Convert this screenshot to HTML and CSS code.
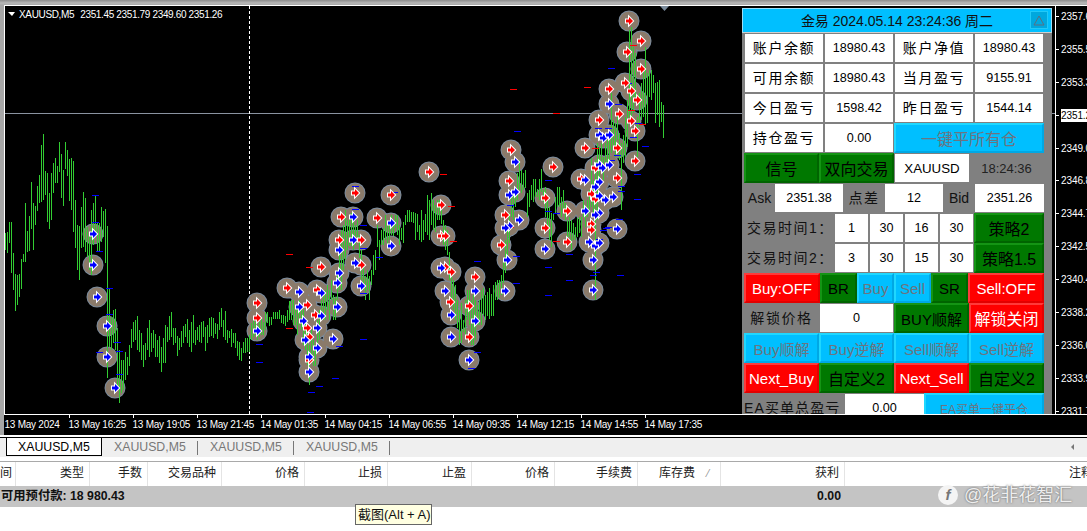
FILE: index.html
```html
<!DOCTYPE html>
<html lang="zh">
<head>
<meta charset="utf-8">
<title>XAUUSD,M5</title>
<link rel="stylesheet" href="styles.css">
</head>
<body>
<div class="app">
  <section class="chart">
    <div class="chart-main">
      <div class="plot">
        <svg class="plot-svg" width="1050" height="408" viewBox="5 6 1050 408" xmlns="http://www.w3.org/2000/svg">
          <defs>
            <path id="discs" d="M429 172h.01M355 193h.01M391 195h.01M341 217h.01M377 218h.01M441 205h.01M339 240h.01M361 240h.01M441 236h.01M445 236h.01M321 267h.01M361 265h.01M445 267h.01M451 272h.01M475 277h.01M287 288h.01M317 290h.01M257 303h.01M307 305h.01M450 302h.01M469 306h.01M257 318h.01M315 315h.01M307 328h.01M309 337h.01M469 337h.01M309 360h.01M629 21h.01M641 41h.01M627 52h.01M641 69h.01M625 83h.01M631 91h.01M609 89h.01M637 100h.01M619 114h.01M599 120h.01M631 121h.01M635 131h.01M585 148h.01M617 148h.01M635 161h.01M511 150h.01M553 167h.01M509 181h.01M595 168h.01M581 179h.01M617 178h.01M591 194h.01M595 199h.01M545 198h.01M567 211h.01M505 215h.01M545 228h.01M591 224h.01M591 230h.01M501 245h.01M567 242h.01M93 234h.01M93 265h.01M97 297h.01M107 326h.01M107 357h.01M115 388h.01M353 217h.01M391 223h.01M353 240h.01M339 250h.01M391 246h.01M339 273h.01M355 263h.01M441 268h.01M299 292h.01M321 293h.01M337 283h.01M361 286h.01M445 291h.01M475 291h.01M299 307h.01M337 307h.01M303 321h.01M321 316h.01M451 315h.01M475 321h.01M257 331h.01M317 328h.01M333 339h.01M305 340h.01M317 348h.01M451 337h.01M309 357h.01M309 372h.01M469 360h.01M609 104h.01M599 135h.01M603 138h.01M609 135h.01M515 162h.01M509 195h.01M515 192h.01M599 165h.01M602 168h.01M609 165h.01M585 180h.01M599 182h.01M595 187h.01M599 196h.01M605 200h.01M613 197h.01M585 211h.01M599 213h.01M595 215h.01M519 220h.01M509 226h.01M505 228h.01M617 229h.01M545 249h.01M589 242h.01M595 246h.01M599 243h.01M507 260h.01M593 260h.01M505 291h.01M593 290h.01"/>
            <path id="r" class="arrow-red" d="M-3-1.5H0V-4L4 0 0 4V1.5H-3Z"/>
            <path id="b" class="arrow-blue" d="M-3-1.5H0V-4L4 0 0 4V1.5H-3Z"/>
          </defs>
          <path class="price-line" d="M5 113.5H1055"/>
          <path class="cross-line" d="M249.5 6V414"/>
          <polygon class="shift-mark" points="660,6 669,6 664.5,11"/>
          <use href="#discs" class="disc-ring"/>
          <use href="#discs" class="disc-fill"/>
          <path class="bars" d="M5 233V250M7 232V253M9 222V243M11 222V273M13 253V290M15 274V311M17 275V305M19 274V297M21 259V289M23 254V262M25 203V262M27 231V252M29 216V251M31 182V229M33 203V250M35 206V225M37 186V211M39 175V203M41 145V202M43 134V200M45 171V195M47 173V222M49 193V229M51 173V220M53 163V193M55 158V183M57 166V183M59 142V172M61 154V198M63 170V206M65 142V169M67 150V176M69 159V201M71 158V210M73 161V232M75 200V248M77 225V270M79 226V280M81 207V248M83 192V247M85 198V252M87 227V257M89 233V270M91 210V275M93 203V245M95 196V233M97 223V252M99 223V252M101 207V242M103 211V237M105 209V263M107 226V378M109 288V347M111 317V350M113 310V343M115 309V350M117 328V387M119 350V403M121 360V393M123 360V390M125 352V380M127 357V375M129 345V366M131 329V348M133 322V342M135 320V340M137 316V350M139 330V352M141 333V360M143 345V367M145 343V360M147 328V350M149 320V357M151 333V352M153 330V348M155 334V357M157 340V357M159 336V363M161 347V372M163 338V363M165 325V363M167 327V342M169 316V340M171 312V337M173 328V345M175 328V343M177 336V356M179 338V350M181 331V347M183 326V343M185 324V337M187 319V343M189 330V347M191 322V352M193 315V343M195 330V345M197 327V340M199 325V342M201 322V343M203 321V337M205 327V351M207 325V343M209 318V337M211 317V336M213 318V338M215 323V334M217 324V339M219 312V330M221 308V327M223 320V337M225 311V340M227 330V343M229 331V338M231 329V347M233 333V343M235 333V348M237 341V356M239 342V360M241 348V361M243 342V353M245 338V353M247 338V352M249 335V352M251 323V340M253 318V337M255 322V335M257 325V340M259 322V337M261 318V335M263 322V335M265 312V330M267 312V323M269 317V326M271 317V325M273 312V319M275 312V319M277 312V319M279 310V319M281 315V323M283 315V324M285 316V326M287 310V322M289 301V320M291 300V320M293 300V325M295 305V325M297 310V335M299 300V325M301 305V330M303 310V345M305 320V350M307 330V365M309 345V385M311 330V360M313 340V366M315 345V366M317 320V345M319 310V340M321 300V320M323 295V320M325 290V320M327 285V310M329 290V320M331 280V300M333 295V320M335 297V320M337 270V300M339 250V290M341 230V290M343 225V270M345 210V260M347 220V250M349 215V246M351 213V246M353 220V250M355 225V245M357 220V240M359 235V258M361 250V280M363 265V290M365 276V300M367 270V290M369 276V300M371 270V285M373 255V275M375 250V270M377 225V247M379 240V260M381 230V245M383 228V245M385 215V240M387 225V245M389 222V240M391 215V235M393 220V236M395 215V228M397 215V235M399 225V245M401 228V240M403 222V243M405 215V225M407 210V222M409 210V222M411 212V222M413 212V223M415 213V240M417 214V232M419 225V240M421 210V242M423 220V240M425 214V232M427 195V235M429 200V240M431 193V225M433 200V230M435 205V232M437 200V220M439 200V220M441 203V224M443 220V245M445 225V250M447 230V255M449 252V280M451 270V300M453 280V310M455 285V320M457 300V328M459 310V345M461 303V343M463 320V332M465 300V335M467 290V320M469 290V325M471 300V345M473 295V345M475 300V340M477 305V325M479 300V325M481 290V325M483 288V315M485 295V320M487 292V316M489 288V319M491 294V316M493 285V316M495 282V300M497 280V300M499 280V298M501 275V295M503 260V283M505 240V273M507 227V260M509 213V243M511 197V217M513 193V220M515 188V207M517 173V200M519 160V190M521 170V193M523 173V190M525 170V188M527 193V217M529 190V207M531 185V200M533 179V202M535 179V197M537 189V197M539 179V200M541 169V192M543 190V202M545 187V217M547 200V227M549 207V240M551 213V247M553 213V220M555 197V213M557 187V207M559 187V207M561 197V217M563 190V213M565 203V220M567 220V243M569 217V237M571 220V250M573 223V240M575 227V240M577 218V237M579 217V233M581 217V237M583 200V217M585 213V227M587 200V217M589 190V213M591 158V207M593 180V217M595 160V300M597 143V220M599 147V187M601 143V173M603 157V180M605 143V170M607 140V167M609 137V160M611 93V153M613 120V150M615 123V157M617 113V140M619 133V160M621 143V210M623 135V163M625 117V157M627 100V147M629 30V117M631 27V120M633 47V113M635 53V97M637 117V157M639 93V127M641 83V120M643 70V117M645 47V125M647 73V123M649 70V97M651 70V100M653 75V93M655 83V123M657 82V115M659 80V127M661 102V122M663 105V138"/>
          <path class="dash-blue" d="M92 195h7M92 222h7M96 251h7M106 288h7M106 314h7M114 342h7M96 352h7M116 351h7M116 374h7M332 378h7M316 386h7M308 392h7M336 346h7M360 339h7M360 293h7M256 344h7M256 362h7M352 186h7M352 209h7M360 225h7M360 248h7M376 257h7M391 192h7M474 352h7M468 368h7M474 261h7M608 68h7M514 131h7M545 180h7M545 211h7M553 213h7M566 254h7M545 267h7M545 295h7M566 280h7M617 275h7M634 199h7M634 174h7M616 219h7M595 128h7M605 128h7M635 123h7M593 272h7M590 275h7M625 83h7M642 146h7M630 137h7M614 155h7M608 160h7M618 186h7M618 191h7M615 104h7M603 228h7M605 227h7M600 230h7M596 239h7M507 205h7M513 283h7M513 256h7M307 412h7"/>
          <path class="dash-red" d="M510 89h7M584 87h7M553 113h7M553 241h7M286 254h7M306 267h7M286 328h7M440 174h7M450 241h7M448 206h7M630 45h7M628 110h7M639 124h7M507 227h7M592 148h7"/>
          <g>
            <use href="#r" x="429" y="172"/><use href="#r" x="355" y="193"/><use href="#r" x="391" y="195"/><use href="#r" x="341" y="217"/><use href="#r" x="377" y="218"/><use href="#r" x="441" y="205"/><use href="#r" x="339" y="240"/><use href="#r" x="361" y="240"/><use href="#r" x="441" y="236"/><use href="#r" x="445" y="236"/><use href="#r" x="321" y="267"/><use href="#r" x="361" y="265"/><use href="#r" x="445" y="267"/><use href="#r" x="451" y="272"/><use href="#r" x="475" y="277"/><use href="#r" x="287" y="288"/><use href="#r" x="317" y="290"/><use href="#r" x="257" y="303"/><use href="#r" x="307" y="305"/><use href="#r" x="450" y="302"/><use href="#r" x="469" y="306"/><use href="#r" x="257" y="318"/><use href="#r" x="315" y="315"/><use href="#r" x="307" y="328"/><use href="#r" x="309" y="337"/><use href="#r" x="469" y="337"/><use href="#r" x="309" y="360"/><use href="#r" x="629" y="21"/><use href="#r" x="641" y="41"/><use href="#r" x="627" y="52"/><use href="#r" x="641" y="69"/><use href="#r" x="625" y="83"/><use href="#r" x="631" y="91"/><use href="#r" x="609" y="89"/><use href="#r" x="637" y="100"/><use href="#r" x="619" y="114"/><use href="#r" x="599" y="120"/><use href="#r" x="631" y="121"/><use href="#r" x="635" y="131"/><use href="#r" x="585" y="148"/><use href="#r" x="617" y="148"/><use href="#r" x="635" y="161"/><use href="#r" x="511" y="150"/><use href="#r" x="553" y="167"/><use href="#r" x="509" y="181"/><use href="#r" x="595" y="168"/><use href="#r" x="581" y="179"/><use href="#r" x="617" y="178"/><use href="#r" x="591" y="194"/><use href="#r" x="595" y="199"/><use href="#r" x="545" y="198"/><use href="#r" x="567" y="211"/><use href="#r" x="505" y="215"/><use href="#r" x="545" y="228"/><use href="#r" x="591" y="224"/><use href="#r" x="591" y="230"/><use href="#r" x="501" y="245"/><use href="#r" x="567" y="242"/>
            <use href="#b" x="93" y="234"/><use href="#b" x="93" y="265"/><use href="#b" x="97" y="297"/><use href="#b" x="107" y="326"/><use href="#b" x="107" y="357"/><use href="#b" x="115" y="388"/><use href="#b" x="353" y="217"/><use href="#b" x="391" y="223"/><use href="#b" x="353" y="240"/><use href="#b" x="339" y="250"/><use href="#b" x="391" y="246"/><use href="#b" x="339" y="273"/><use href="#b" x="355" y="263"/><use href="#b" x="441" y="268"/><use href="#b" x="299" y="292"/><use href="#b" x="321" y="293"/><use href="#b" x="337" y="283"/><use href="#b" x="361" y="286"/><use href="#b" x="445" y="291"/><use href="#b" x="475" y="291"/><use href="#b" x="299" y="307"/><use href="#b" x="337" y="307"/><use href="#b" x="303" y="321"/><use href="#b" x="321" y="316"/><use href="#b" x="451" y="315"/><use href="#b" x="475" y="321"/><use href="#b" x="257" y="331"/><use href="#b" x="317" y="328"/><use href="#b" x="333" y="339"/><use href="#b" x="305" y="340"/><use href="#b" x="317" y="348"/><use href="#b" x="451" y="337"/><use href="#b" x="309" y="357"/><use href="#b" x="309" y="372"/><use href="#b" x="469" y="360"/><use href="#b" x="609" y="104"/><use href="#b" x="599" y="135"/><use href="#b" x="603" y="138"/><use href="#b" x="609" y="135"/><use href="#b" x="515" y="162"/><use href="#b" x="509" y="195"/><use href="#b" x="515" y="192"/><use href="#b" x="599" y="165"/><use href="#b" x="602" y="168"/><use href="#b" x="609" y="165"/><use href="#b" x="585" y="180"/><use href="#b" x="599" y="182"/><use href="#b" x="595" y="187"/><use href="#b" x="599" y="196"/><use href="#b" x="605" y="200"/><use href="#b" x="613" y="197"/><use href="#b" x="585" y="211"/><use href="#b" x="599" y="213"/><use href="#b" x="595" y="215"/><use href="#b" x="519" y="220"/><use href="#b" x="509" y="226"/><use href="#b" x="505" y="228"/><use href="#b" x="617" y="229"/><use href="#b" x="545" y="249"/><use href="#b" x="589" y="242"/><use href="#b" x="595" y="246"/><use href="#b" x="599" y="243"/><use href="#b" x="507" y="260"/><use href="#b" x="593" y="260"/><use href="#b" x="505" y="291"/><use href="#b" x="593" y="290"/>
          </g>
        </svg>

        <div class="legend"><span class="legend-mark"></span><span>XAUUSD,M5</span><span class="legend-ohlc">2351.45 2351.79 2349.60 2351.26</span></div>

        <div class="panel">
          <div class="title">金易 2024.05.14 23:24:36 周二<span class="collapse"><svg width="12" height="11" viewBox="0 0 12 11"><path class="collapse-tri" d="M6 1L11 10H1Z"/></svg></span></div>
          <div class="row cols-info"><div class="cell zh">账户余额</div><div class="cell">18980.43</div><div class="cell zh">账户净值</div><div class="cell">18980.43</div></div>
          <div class="row cols-info"><div class="cell zh">可用余额</div><div class="cell">18980.43</div><div class="cell zh">当月盈亏</div><div class="cell">9155.91</div></div>
          <div class="row cols-info"><div class="cell zh">今日盈亏</div><div class="cell">1598.42</div><div class="cell zh">昨日盈亏</div><div class="cell">1544.14</div></div>
          <div class="row cols-info"><div class="cell zh">持仓盈亏</div><div class="cell">0.00</div><div class="btn cyan span2 wide">一键平所有仓</div></div>
          <div class="row cols-even"><div class="btn green wide">信号</div><div class="btn green wide">双向交易</div><div class="cell sym">XAUUSD</div><div class="plain time">18:24:36</div></div>
          <div class="row cols-quote"><div class="plain">Ask</div><div class="cell">2351.38</div><div class="plain zh">点差</div><div class="cell">12</div><div class="plain">Bid</div><div class="cell">2351.26</div></div>
          <div class="row cols-time"><div class="plain zh left">交易时间1：</div><div class="cell">1</div><div class="cell">30</div><div class="cell">16</div><div class="cell">30</div><div class="btn green wide">策略2</div></div>
          <div class="row cols-time"><div class="plain zh left">交易时间2：</div><div class="cell">3</div><div class="cell">30</div><div class="cell">15</div><div class="cell">30</div><div class="btn green wide">策略1.5</div></div>
          <div class="row cols-switch"><div class="btn red">Buy:OFF</div><div class="btn green">BR</div><div class="btn cyan">Buy</div><div class="btn cyan">Sell</div><div class="btn green">SR</div><div class="btn red">Sell:OFF</div></div>
          <div class="row cols-even"><div class="plain zh">解锁价格</div><div class="cell">0</div><div class="btn green">BUY顺解</div><div class="btn red wide">解锁关闭</div></div>
          <div class="row cols-even"><div class="btn cyan">Buy顺解</div><div class="btn cyan">Buy逆解</div><div class="btn cyan">Sell顺解</div><div class="btn cyan">Sell逆解</div></div>
          <div class="row cols-even"><div class="btn red">Next_Buy</div><div class="btn green wide">自定义2</div><div class="btn red">Next_Sell</div><div class="btn green wide">自定义2</div></div>
          <div class="row cols-ea"><div class="plain zh ea-label">EA买单总盈亏</div><div class="cell">0.00</div><div class="btn cyan ea-btn">EA买单一键平仓</div></div>
        </div>
      </div>
      <div class="price-axis">
        <div class="tick">2357.6</div><div class="tick">2355.5</div><div class="tick">2353.3</div><div class="tick"><span class="now">2351.2</span></div><div class="tick">2349.0</div><div class="tick">2346.8</div><div class="tick">2344.7</div><div class="tick">2342.5</div><div class="tick">2340.4</div><div class="tick">2338.2</div><div class="tick">2336.0</div><div class="tick">2333.9</div><div class="tick">2331.7</div>
      </div>
    </div>
    <div class="time-axis">
      <div>13 May 2024</div><div>13 May 16:25</div><div>13 May 19:05</div><div>13 May 21:45</div><div>14 May 01:35</div><div>14 May 04:15</div><div>14 May 06:55</div><div>14 May 09:35</div><div>14 May 12:15</div><div>14 May 14:55</div><div>14 May 17:35</div>
    </div>
  </section>

  <nav class="tabs">
    <div class="tab active">XAUUSD,M5</div>
    <div class="tab">XAUUSD,M5</div>
    <div class="tab">XAUUSD,M5</div>
    <div class="tab">XAUUSD,M5</div>
    <span class="tab-scroll"></span>
  </nav>

  <div class="table-head">
    <div>间</div><div>类型</div><div>手数</div><div>交易品种</div><div>价格</div><div>止损</div><div>止盈</div><div>价格</div><div>手续费</div><div class="sorted">库存费<span class="sort-mark">⁄</span></div><div>获利</div><div>注释</div>
  </div>
  <div class="summary"><span>可用预付款: 18 980.43</span><span>0.00</span></div>
  <div class="tooltip">截图(Alt + A)</div>
  <div class="watermark"><span class="wm-logo">f</span><span>@花非花智汇</span></div>
</div>
</body>
</html>
```
FILE: styles.css
```css
* { box-sizing: border-box; }
html, body { margin: 0; padding: 0; height: 100%; overflow: hidden; background: #fff; }
body { font-family: "Liberation Sans", "Noto Sans CJK SC", sans-serif; }

.app { position: relative; width: 1087px; height: 531px; overflow: hidden; display: flex; flex-direction: column; background: #fff; }

/* Chart window */
.chart { height: 435px; flex: none; padding: 5px 0 0 4px; background: linear-gradient(#8c8c8c, #b8b8b8 60%, #a8a8a8) top left / 100% 5px no-repeat, #a6a6a6; display: flex; flex-direction: column; }
.chart-main { height: 410px; flex: none; display: flex; border-top: 1px solid #fff; border-left: 1px solid #fff; border-bottom: 1px solid #fff; background: #000; }
.plot { position: relative; width: 1050px; height: 408px; flex: none; overflow: hidden; }
.plot-svg { display: block; }
.price-line { stroke: #8a93a0; fill: none; }
.cross-line { stroke: #fff; stroke-dasharray: 3 2; fill: none; }
.shift-mark { fill: #7b8b9b; }
.disc-ring, .disc-fill { fill: none; stroke-linecap: round; }
.disc-ring { stroke: #7a8a9c; stroke-width: 21px; }
.disc-fill { stroke: #8a7a6a; stroke-width: 19px; }
.bars { stroke: #32cd32; fill: none; transform: translateX(.5px); shape-rendering: crispEdges; }
.dash-blue, .dash-red { fill: none; shape-rendering: crispEdges; transform: translateY(.5px); }
.dash-blue { stroke: #0000ff; }
.dash-red { stroke: #ff0000; }
.arrow-red, .arrow-blue { stroke: #fff; stroke-width: 2px; paint-order: stroke; stroke-linejoin: miter; }
.arrow-red { fill: #ff0000; }
.arrow-blue { fill: #0000ff; }

.legend { position: absolute; left: 3px; top: 1px; display: flex; align-items: center; gap: 6px; height: 14px; color: #fff; font-size: 10px; letter-spacing: -.35px; white-space: nowrap; }
.legend-mark { width: 0; height: 0; border-left: 4px solid transparent; border-right: 3.5px solid transparent; border-top: 4px solid #fff; margin-right: -2px; }

.price-axis { flex: 1; min-width: 0; border-left: 1px solid #fff; display: flex; flex-direction: column; color: #fff; font-size: 10px; letter-spacing: -.1px; overflow: hidden; }
.tick { height: 32.9px; flex: none; line-height: 22px; display: flex; align-items: flex-start; white-space: nowrap; }
.tick::before { content: ""; width: 3px; height: 1px; margin-top: 10px; margin-right: 2px; background: #fff; flex: none; }
.now { background: #fff; color: #000; line-height: 13px; height: 13px; margin: 4px 0 0 0; padding: 0 2px 0 0; width: 100%; }

.time-axis { flex: 1; display: grid; grid-template-columns: repeat(11, 64px); background: #000; color: #fff; font-size: 10px; letter-spacing: -.25px; white-space: nowrap; }
.time-axis > div { position: relative; padding: 3px 0 0 .5px; line-height: 14px; }
.time-axis > div + div::before { content: ""; position: absolute; left: 1px; top: 0; width: 1px; height: 3px; background: #fff; }

/* Panel */
.panel { position: absolute; left: 737px; top: 2px; width: 310px; height: 420px; background: #808080; }
.title { position: relative; height: 25px; background: #00bfff; border: 1px solid #9bdcf5; border-bottom-color: #cfcfcf; color: #111; font-size: 14px; line-height: 24px; text-align: center; white-space: nowrap; }
.collapse { position: absolute; right: 3px; top: 2px; width: 18px; height: 18px; background: #00a8de; border: 1px solid #22c9f7; display: flex; align-items: center; justify-content: center; }
.collapse-tri { fill: none; stroke: #5c6f80; }

.row { height: 30px; margin-left: 2px; width: 300px; display: grid; align-items: stretch; }
.cols-info { grid-template-columns: 80px 70px 80px 70px; }
.cols-even { grid-template-columns: repeat(4, 75px); }
.cols-quote { grid-template-columns: 31px 68px 42px 58px 32px 69px; }
.cols-quote .cell { margin: 1px 0; }
.cols-time { grid-template-columns: 90px repeat(4, 35px) 70px; }
.cols-switch { grid-template-columns: 76px repeat(4, 37px) 76px; }
.cols-ea { grid-template-columns: 101px 79px 120px; }
.cols-ea .cell { margin: 1px 0; }

.cell, .plain, .btn { display: flex; align-items: center; justify-content: center; white-space: nowrap; overflow: hidden; }
.cell { margin: 1px; background: #fff; color: #000; font-size: 12.6px; }
.zh { font-size: 14px; letter-spacing: 1.6px; padding-bottom: 2px; }
.sym { font-size: 13.3px; margin: 1px 0 1px 1px; }
.plain { color: #111; font-size: 14px; }
.plain.zh { font-size: 14px; }
.left { justify-content: flex-start; padding-left: 3px; letter-spacing: 1.5px; }
.time { font-size: 13px; color: #222; }

.btn { font-size: 15px; border: 2px solid; }
.wide { font-size: 16px; padding-bottom: 1px; }
.span2 { grid-column: span 2; }
.green { background: #007800; border-color: #149414 #006400 #006400 #149414; color: #000; }
.cyan { background: #00bfff; border-color: #1fd7ff #00a8e4 #00a8e4 #1fd7ff; color: #6c7480; }
.red { background: #ff0000; border-color: #ff3a3a #e30000 #e30000 #ff3a3a; color: #fff; }
.ea-label { justify-content: flex-start; padding-left: 0; letter-spacing: 1.1px; overflow: visible; }
.ea-btn { font-size: 12px; }

/* Tabs */
.tabs { position: relative; height: 20px; flex: none; margin-top: 2px; background: #efefef; border-top: 1px solid #000; display: flex; padding-left: 6px; font-size: 12.3px; color: #777; }
.tab { width: 96px; height: 18px; line-height: 19px; padding-left: 12px; position: relative; white-space: nowrap; }
.tab:not(.active)::after { content: ""; position: absolute; right: 0; top: 3px; width: 1px; height: 14px; background: #777; }
.tab.active { width: 96px; background: #fff; color: #000; border-left: 1px solid #000; border-right: 1px solid #000; border-bottom: 1px solid #000; padding-left: 11px; }
.tab-scroll { position: absolute; left: 1071px; top: 6px; width: 0; height: 0; border-top: 3px solid transparent; border-bottom: 3px solid transparent; border-right: 3px solid #777; }

/* Terminal table */
.table-head { height: 29px; flex: none; width: 1098px; padding-top: 5px; background: #fff; display: grid; grid-template-columns: 16px 74px 58px 74px 83px 83px 84px 83px 83px 83px 124px 254px; font-size: 12px; color: #222; position: relative; }
.table-head::before { content: ""; position: absolute; left: 0; right: 0; top: 4px; height: 1px; background: #a9a9a9; }
.table-head > div { border-right: 1px solid #e4e4e4; text-align: right; padding-right: 5px; line-height: 23px; white-space: nowrap; }
.table-head > div:first-child { padding-right: 5px; overflow: hidden; }
.sorted { padding-right: 25px !important; position: relative; }
.sort-mark { position: absolute; right: 11px; top: 0; color: #888; font-size: 10px; }

.summary { height: 21px; flex: none; background: #c4c4c4; display: flex; justify-content: space-between; width: 841px; font-size: 12.3px; font-weight: 700; line-height: 21px; color: #111; padding-left: 1px; box-shadow: 246px 0 0 #c4c4c4; }

.tooltip { position: absolute; left: 355px; top: 504px; width: 77px; height: 21px; background: #ffffe1; border: 1px solid #666; color: #111; font-size: 13px; line-height: 19px; padding-left: 2px; white-space: nowrap; }

.watermark { position: absolute; left: 938px; top: 485px; display: flex; align-items: center; gap: 6px; color: #eee; font-size: 18px; line-height: 20px; text-shadow: 0 0 2px #555; white-space: nowrap; }
.wm-logo { width: 20px; height: 20px; border-radius: 50%; background: #f4f4f4; color: #777; font-size: 15px; font-style: italic; font-weight: 700; line-height: 20px; text-align: center; text-shadow: none; }
```
